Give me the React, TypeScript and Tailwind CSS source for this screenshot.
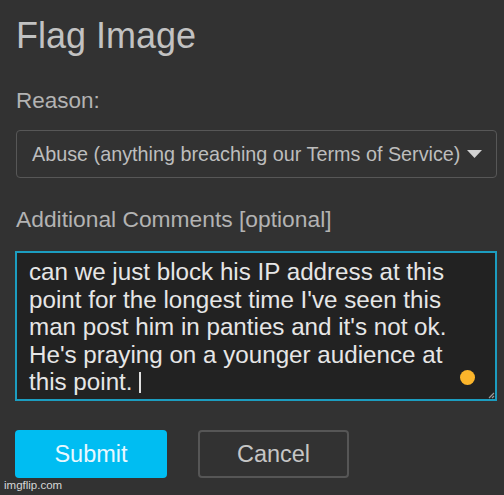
import React from 'react';

const lines = [
  'can we just block his IP address at this',
  "point for the longest time I've seen this",
  "man post him in panties and it's not ok.",
  "He's praying on a younger audience at",
  'this point.',
];

const FlagImageDialog = () => {
  return (
    <div
      className="relative w-[504px] h-[495px] overflow-hidden bg-[#323232] px-[15px]"
      style={{ fontFamily: '"Liberation Sans", Arial, sans-serif' }}
    >
      <h1 className="pt-4 pl-px text-[36px] leading-[40px] text-[#c2c2c2]">Flag Image</h1>

      <div className="mt-8 pl-px text-[22.5px] leading-[26px] text-[#b3b3b3]">Reason:</div>

      <div className="mt-4 ml-px flex h-12 w-[481px] items-center justify-between rounded-[4px] border border-[#575757] pl-[15px] pr-[14px]">
        <span className="text-[19.8px] leading-[22px] text-[#bdbdbd]">
          Abuse (anything breaching our Terms of Service)
        </span>
        <svg width="15" height="8" viewBox="0 0 15 8">
          <path d="M0 0 H15 L7.5 8 Z" fill="#d2d2d2" />
        </svg>
      </div>

      <div className="mt-[28px] pl-px text-[22.8px] leading-[26px] text-[#b3b3b3]">
        Additional Comments [optional]
      </div>

      <div className="relative mt-[19px] h-[150px] w-[482px] border-2 border-[#1c9dc0] bg-[#222222] pl-3 pt-[5px] text-[24.2px] leading-[27.5px] text-[#e6e6e6]">
        {lines.map((line, i) => (
          <div key={i} className="whitespace-nowrap">
            {line}
            {i === lines.length - 1 && (
              <span className="ml-[6px] inline-block h-[21px] w-[2px] translate-y-[3px] bg-[#e0e0e0]" />
            )}
          </div>
        ))}
        <span className="absolute right-[20px] bottom-[14px] h-[15px] w-[15px] rounded-full bg-[#fbb52b]" />
        <svg className="absolute right-0 bottom-0" width="8" height="8" viewBox="0 0 8 8">
          <path d="M7 2 L2 7 M7 5 L5 7" stroke="#9a9a9a" strokeWidth="1.2" />
        </svg>
      </div>

      <div className="mt-[29px] flex gap-[31px]">
        <button className="h-12 w-[152px] rounded-[4px] bg-[#00bdf2] pt-[2px] text-[23.5px] text-[#e8f8ff]">
          Submit
        </button>
        <button className="h-12 w-[151px] rounded-[4px] border-2 border-[#565656] pt-[2px] text-[23.5px] text-[#c6c6c6]">
          Cancel
        </button>
      </div>

      <span className="absolute left-[4px] bottom-[3px] text-[11.5px] leading-[13px] text-[#d6d6d6]">
        imgflip.com
      </span>
    </div>
  );
};

export default function App() {
  return <FlagImageDialog />;
}
